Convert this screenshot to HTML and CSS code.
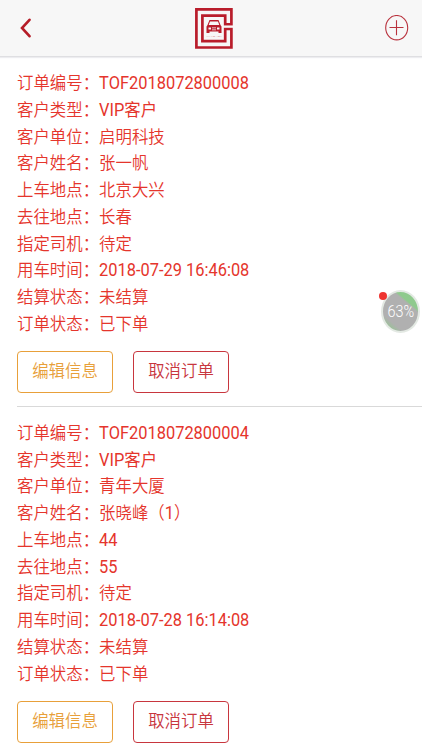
FILE: index.html
```html
<!DOCTYPE html>
<html lang="zh-CN">
<head>
    <meta charset="UTF-8">
    <meta name="viewport" content="width=device-width, initial-scale=1.0">
    <title>订单列表</title>
    <link rel="stylesheet" href="styles.css">
</head>
<body>
    <header class="header">
        <a class="back" href="#">
            <svg width="12" height="20" viewBox="0 0 12 20"><path d="M9.500 1.800 2 10l7.500 8.200"/></svg>
        </a>
        <svg class="logo" width="38" height="42" viewBox="0 0 38 42">
            <path class="frame" d="M30.200 17.300h6.200V2.300H1.400v38.200h35V21.900H30.200v12.200H7.400V8.700h22.800z" />
            <path class="gap" d="M28.300 19.600h10"/>
            <path class="car" fill-rule="evenodd" d="M14.500 13h9l2 5 1 1.500V26h-3v-1.500h-9V26h-3v-6.500l1-1.500zM15 14.500 13.700 18h10.600L23 14.500zM13.500 20.500v2H16v-2zM22 20.500v2h2.500v-2zM17 20.500v.7h4v-.7zM17 22.500v.8h4v-.8z"/>
            <text x="11.500" y="29.700" textLength="15">SPECIAL CAR</text>
        </svg>
        <a class="add" href="#">
            <svg width="24" height="26" viewBox="0 0 24 26"><ellipse cx="11.700" cy="12.700" rx="11" ry="12.200"/><path d="M11.500 5.200v15M4.500 12.500h14"/></svg>
        </a>
    </header>

    <main class="order-list">
        <section class="order">
            <div class="order-info">
                <p>订单编号：<span>TOF2018072800008</span></p>
                <p>客户类型：<span>VIP客户</span></p>
                <p>客户单位：启明科技</p>
                <p>客户姓名：张一帆</p>
                <p>上车地点：北京大兴</p>
                <p>去往地点：长春</p>
                <p>指定司机：待定</p>
                <p>用车时间：<span>2018-07-29 16:46:08</span></p>
                <p>结算状态：未结算</p>
                <p>订单状态：已下单</p>
            </div>
            <div class="order-btns">
                <button class="btn edit-btn"><span>编辑信息</span></button>
                <button class="btn cancel-btn"><span>取消订单</span></button>
            </div>
        </section>
        <section class="order">
            <div class="order-info">
                <p>订单编号：<span>TOF2018072800004</span></p>
                <p>客户类型：<span>VIP客户</span></p>
                <p>客户单位：青年大厦</p>
                <p>客户姓名：张晓峰（<span>1</span>）</p>
                <p>上车地点：<span>44</span></p>
                <p>去往地点：<span>55</span></p>
                <p>指定司机：待定</p>
                <p>用车时间：<span>2018-07-28 16:14:08</span></p>
                <p>结算状态：未结算</p>
                <p>订单状态：已下单</p>
            </div>
            <div class="order-btns">
                <button class="btn edit-btn"><span>编辑信息</span></button>
                <button class="btn cancel-btn"><span>取消订单</span></button>
            </div>
        </section>
    </main>

    <!-- 悬浮球 -->
    <div class="float-ball"><span>63%</span></div>
</body>
</html>
```

FILE: styles.css
```css
* {
    box-sizing: border-box;
}

body {
    margin: 0;
    height: 750px;
    overflow: hidden;
    background-color: #fff;
    font-family: Roboto, "Noto Sans CJK SC", sans-serif;
    font-weight: 350;
}

.header {
    display: flex;
    align-items: center;
    justify-content: space-between;
    height: 57px;
    padding: 0 13px 1px 20px;
    background-color: #f7f7f7;
    border-bottom: 1px solid #dfdfe2;
    box-shadow: 0 1px 1px #ededf0;
}

.header svg {
    display: block;
    fill: none;
}

.back,
.add {
    display: flex;
    width: 24px;
}

.back svg {
    stroke: #b51c27;
    stroke-width: 2.6;
    stroke-linecap: round;
}

.logo {
    margin-right: 1px;
}

.frame {
    stroke: #b91d2b;
    stroke-width: 2.7;
}

.gap {
    stroke: #f7f7f7;
    stroke-width: 2;
}

.header .car {
    fill: #b91d2b;
}

.logo text {
    fill: #d78088;
    font-size: 2.5px;
}

.add svg {
    stroke: #b9323d;
    stroke-width: 1.1;
}

.order-list {
    padding-left: 17px;
}

.order {
    height: 349.6px;
    padding-top: 13.2px;
    border-bottom: 1px solid #d9d9d9;
}

/* 文字略窄 */
.order-info {
    color: #e5352c;
    font-size: 17.6px;
    line-height: 26.75px;
    white-space: nowrap;
    transform: scaleX(0.933);
    transform-origin: left;
}

.order-info p {
    margin: 0;
}

.order-info span {
    font-weight: 400;
}

.order-btns {
    display: flex;
    gap: 20px;
    margin-top: 13.3px;
}

.btn {
    width: 96px;
    height: 42px;
    padding: 0 0 5px;
    border: 1px solid;
    border-radius: 4px;
    background-color: #fff;
    font-family: inherit;
    font-size: 17.6px;
    font-weight: inherit;
}

.btn span {
    display: block;
    transform: scaleX(0.932);
}

.edit-btn {
    color: #e8a03a;
}

.cancel-btn {
    color: #c8363e;
}

.float-ball {
    position: absolute;
    top: 290px;
    left: 381px;
    display: flex;
    align-items: center;
    justify-content: center;
    width: 39px;
    height: 43px;
    border: 2px solid #e3e9e3;
    border-radius: 50%;
    background: linear-gradient(40deg, #b0b0b0 10%, #9cc09a 14%, #b0b0b0 24%, #b0b0b0 70%, #8fca8d 74%);
    color: #fff;
    font-size: 16px;
}

.float-ball span {
    transform: scaleX(0.9);
}

.float-ball::before {
    content: "";
    position: absolute;
    top: 0;
    left: -4px;
    width: 8px;
    height: 8px;
    border-radius: 50%;
    background-color: #ee3430;
}
```
